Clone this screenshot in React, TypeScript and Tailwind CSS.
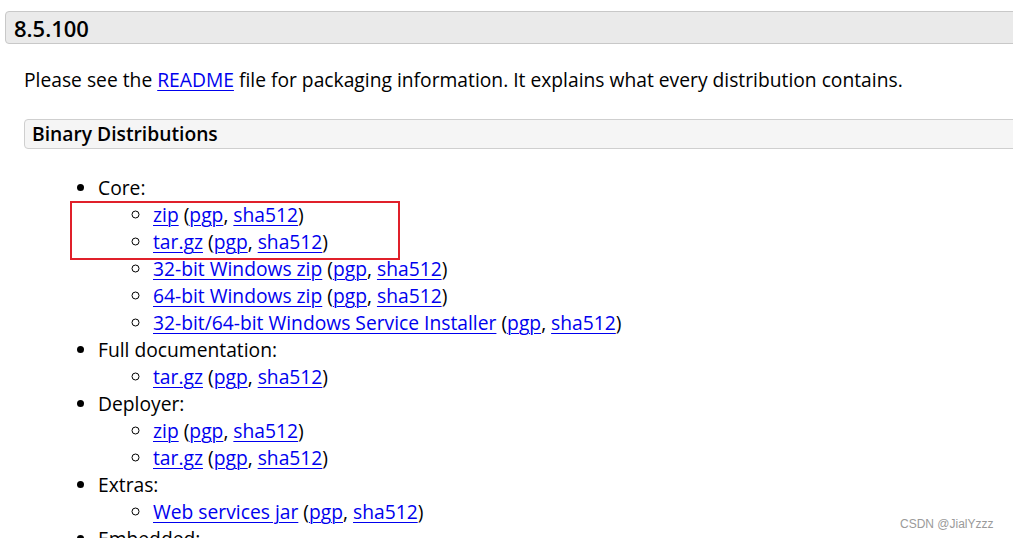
import React from "react";

const A = ({ children }: { children: React.ReactNode }) => (
  <a href="#" className="text-[#0000ee] underline underline-offset-[3px] decoration-1">{children}</a>
);

const Item = ({ name }: { name: string }) => (
  <li className="list-[circle]">
    <A>{name}</A> (<A>pgp</A>, <A>sha512</A>)
  </li>
);

export default function App() {
  return (
    <div className="relative w-[1013px] h-[538px] overflow-hidden bg-white text-black" style={{ fontFamily: '"Open Sans", sans-serif' }}>
      <div className="pt-[11px] pl-[5px]">
        <div className="w-[1100px] h-[33px] rounded-[4px] border border-[#c8c8c8] bg-[#eaeaea] pl-[8px] flex items-center">
          <span className="text-[22px] font-semibold leading-none">8.5.100</span>
        </div>
      </div>
      <div className="pl-[24px]">
        <p className="mt-[22px] text-[19.25px] leading-[27px]">
          Please see the <A>README</A> file for packaging information. It explains what every distribution contains.
        </p>
        <div className="mt-[26px] w-[1100px] h-[30px] rounded-[4px] border border-[#cfcfcf] bg-[#f5f5f5] pl-[7px] flex items-center">
          <span className="text-[19.25px] font-semibold leading-none">Binary Distributions</span>
        </div>
        <ul className="mt-[25px] pl-[74px] list-disc text-[19.25px] leading-[27px]">
          <li>
            Core:
            <ul className="pl-[55px]">
              <Item name="zip" />
              <Item name="tar.gz" />
              <Item name="32-bit Windows zip" />
              <Item name="64-bit Windows zip" />
              <Item name="32-bit/64-bit Windows Service Installer" />
            </ul>
          </li>
          <li>
            Full documentation:
            <ul className="pl-[55px]">
              <Item name="tar.gz" />
            </ul>
          </li>
          <li>
            Deployer:
            <ul className="pl-[55px]">
              <Item name="zip" />
              <Item name="tar.gz" />
            </ul>
          </li>
          <li>
            Extras:
            <ul className="pl-[55px]">
              <Item name="Web services jar" />
            </ul>
          </li>
          <li>Embedded:</li>
        </ul>
      </div>
      <div className="absolute left-[70px] top-[201px] w-[330px] h-[59px] border-2 border-[#e0202a]" />
      <div className="absolute left-[900px] top-[515px] text-[12px] text-[#9a9a9a]" style={{ fontFamily: '"Liberation Sans", sans-serif' }}>
        CSDN @JialYzzz
      </div>
    </div>
  );
}
